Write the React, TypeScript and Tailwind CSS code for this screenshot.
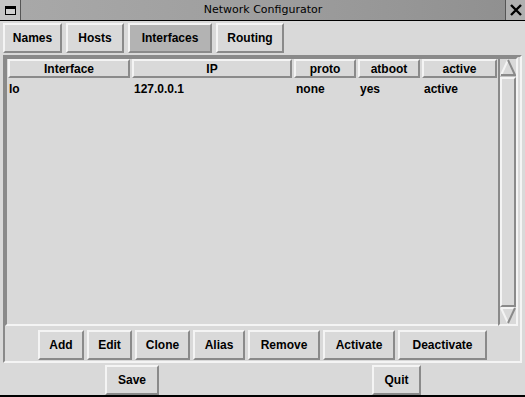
import React from "react";

const raised =
  "border-2 border-t-[#f4f4f4] border-l-[#f4f4f4] border-r-[#8a8a8a] border-b-[#8a8a8a]";
const sunken =
  "border-2 border-t-[#8a8a8a] border-l-[#8a8a8a] border-r-[#f4f4f4] border-b-[#f4f4f4]";

function Btn({ label, w, pressed }: { label: string; w: string; pressed?: boolean }) {
  return (
    <div
      className={`${w} h-[30px] flex items-center justify-center text-[12px] font-bold text-black ${raised} ${
        pressed ? "bg-[#b3b3b3]" : "bg-[#d9d9d9]"
      }`}
    >
      {label}
    </div>
  );
}

function Head({ label, w }: { label: string; w: string }) {
  return (
    <div className={`${w} h-[19px] flex items-center justify-center text-[12px] font-bold ${raised} bg-[#d9d9d9]`}>
      {label}
    </div>
  );
}

export default function App() {
  return (
    <div
      className="w-[525px] h-[397px] bg-[#d9d9d9] flex flex-col overflow-hidden text-black"
      style={{ fontFamily: "'Liberation Sans', Arial, sans-serif" }}
    >
      {/* title bar */}
      <div className="h-[21px] flex border-b border-black bg-gradient-to-r from-[#a9a9a9] via-[#9e9e9e] to-[#8f8f8f]">
        <div className="w-[21px] h-full bg-[#c4c4c4] border-r border-[#555] flex items-center justify-center">
          <div className="w-[11px] h-[9px] border border-black border-t-[3px] bg-[#d0d0d0]" />
        </div>
        <div
          className="flex-1 flex items-center justify-center text-[11px] text-black"
          style={{ fontFamily: "'DejaVu Sans', sans-serif" }}
        >
          Network Configurator
        </div>
        <div className="w-[20px] h-full bg-[#b0b0b0] border-l border-[#555] flex items-center justify-center">
          <svg width="12" height="12" viewBox="0 0 12 12">
            <path d="M1 1 L11 11 M11 1 L1 11" stroke="black" strokeWidth="2.4" />
          </svg>
        </div>
      </div>

      {/* tabs */}
      <div className="flex gap-[4px] pl-[3px] mt-[2px] h-[29px]">
        <Btn label="Names" w="w-[59px]" />
        <Btn label="Hosts" w="w-[58px]" />
        <Btn label="Interfaces" w="w-[84px]" pressed />
        <Btn label="Routing" w="w-[68px]" />
      </div>

      {/* main frame */}
      <div className={`mx-[3px] mt-[3px] h-[308px] ${sunken} flex flex-col`}>
        <div className="flex h-[269px] pr-[2px]">
          <div className={`flex-1 ${sunken} border-r-0 bg-[#d9d9d9] flex flex-col pl-[1px]`}>
            <div className="flex gap-[2px]">
              <Head label="Interface" w="w-[122px]" />
              <Head label="IP" w="w-[160px]" />
              <Head label="proto" w="w-[62px]" />
              <Head label="atboot" w="w-[62px]" />
              <Head label="active" w="w-[75px]" />
            </div>
            <div className="flex text-[12px] font-bold mt-[3px] h-[16px] items-center">
              <div className="w-[124px] pl-[1px]">lo</div>
              <div className="w-[162px] pl-[2px]">127.0.0.1</div>
              <div className="w-[64px] pl-[2px]">none</div>
              <div className="w-[64px] pl-[2px]">yes</div>
              <div className="w-[75px] pl-[2px]">active</div>
            </div>
          </div>
          <div className={`w-[20px] ${sunken} bg-[#c3c3c3] flex flex-col`}>
            <svg width="16" height="17" viewBox="0 0 16 17" className="bg-[#d9d9d9]">
              <path d="M8 1 L15 16 L1 16 Z" fill="#d9d9d9" />
              <path d="M1 16 L8 1" stroke="#f4f4f4" strokeWidth="2" />
              <path d="M8 1 L15 16 L1 16" stroke="#8a8a8a" strokeWidth="2" fill="none" />
            </svg>
            <div className={`mt-[1px] flex-1 ${raised} bg-[#d9d9d9]`} />
            <svg width="16" height="17" viewBox="0 0 16 17" className="bg-[#d9d9d9]">
              <path d="M1 1 L15 1 L8 16 Z" fill="#d9d9d9" />
              <path d="M1 1 L15 1 M1 1 L8 16" stroke="#f4f4f4" strokeWidth="2" fill="none" />
              <path d="M15 1 L8 16" stroke="#8a8a8a" strokeWidth="2" />
            </svg>
          </div>
        </div>
        <div className="flex-1 flex items-center gap-[3px] pl-[33px] pt-[3px]">
          <Btn label="Add" w="w-[46px]" />
          <Btn label="Edit" w="w-[45px]" />
          <Btn label="Clone" w="w-[55px]" />
          <Btn label="Alias" w="w-[52px]" />
          <Btn label="Remove" w="w-[72px]" />
          <Btn label="Activate" w="w-[72px]" />
          <Btn label="Deactivate" w="w-[89px]" />
        </div>
      </div>

      {/* bottom */}
      <div className="flex items-center mt-[1px] h-[31px]">
        <div className="ml-[105px]">
          <Btn label="Save" w="w-[54px]" />
        </div>
        <div className="ml-[213px]">
          <Btn label="Quit" w="w-[49px]" />
        </div>
      </div>
      <div className="h-[2px] bg-black mt-auto" />
    </div>
  );
}
